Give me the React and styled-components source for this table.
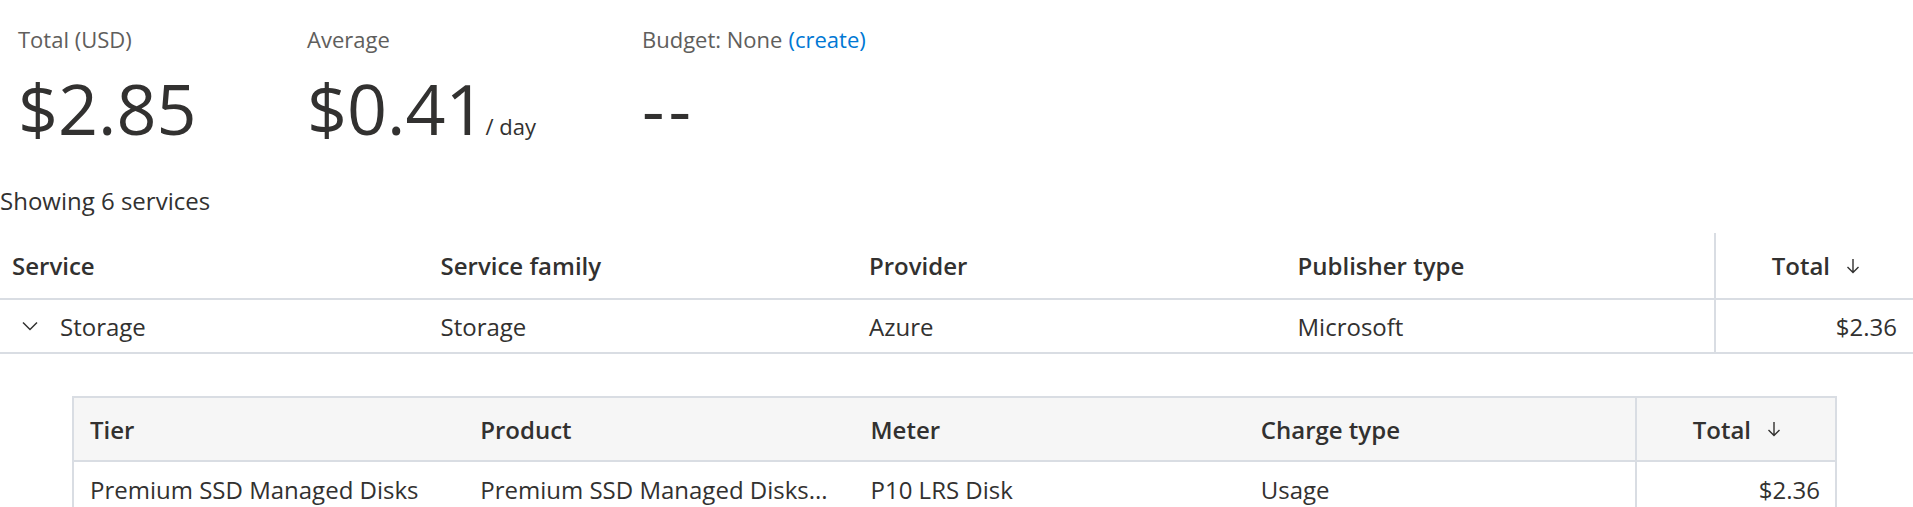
import React from 'react';
import styled, { createGlobalStyle } from 'styled-components';

const GlobalStyle = createGlobalStyle`
  html, body {
    margin: 0;
    padding: 0;
    background: #ffffff;
    overflow: hidden;
  }
  body {
    font-family: "Open Sans", "Noto Sans", sans-serif;
    color: #323130;
  }
`;

const LINE = '#d9dde3';

const Page = styled.div`
  width: 1913px;
`;

const Summary = styled.div`
  display: flex;
  padding: 24px 0 0 18px;
`;

const Kpi = styled.div`
  width: ${props => props.$width}px;
  flex-shrink: 0;
`;

const KpiLabel = styled.div`
  font-size: 22px;
  line-height: 30px;
  color: #605e5c;
  white-space: nowrap;
`;

const CreateLink = styled.a`
  color: #0078d4;
  text-decoration: none;
  margin-left: 6px;
  cursor: pointer;
`;

const KpiValueRow = styled.div`
  display: flex;
  align-items: baseline;
  margin-top: 19px;
  height: 70px;
`;

const KpiValue = styled.span`
  font-size: 70px;
  line-height: 70px;
  color: #323130;
  letter-spacing: ${props => props.$spacing || 0}px;
`;

const KpiUnit = styled.span`
  font-size: 22px;
  margin-left: 0;
  color: #323130;
`;

const ResultCount = styled.div`
  font-size: 24px;
  line-height: 32px;
  margin-top: 42px;
  color: #323130;
`;

const Table = styled.div`
  margin-top: 16px;
`;

const Row = styled.div`
  display: grid;
  grid-template-columns: ${props => props.$cols};
  height: ${props => props.$height}px;
  border-bottom: 2px solid ${LINE};
  background: ${props => props.$bg || 'transparent'};
`;

const Cell = styled.div`
  display: flex;
  align-items: center;
  justify-content: ${props => (props.$right ? 'flex-end' : 'flex-start')};
  padding: 0 ${props => props.$padRight ?? props.$pad}px 0 ${props => props.$pad}px;
  border-left: ${props => (props.$divider ? `2px solid ${LINE}` : 'none')};
  font-size: 24px;
  font-weight: ${props => (props.$head ? 600 : 400)};
  color: #323130;
  white-space: nowrap;
  overflow: hidden;
  min-width: 0;
`;

const CellText = styled.span`
  overflow: hidden;
  text-overflow: ellipsis;
`;

const Chevron = styled.svg`
  width: 16px;
  height: 10px;
  margin: 0 22px 0 10px;
  flex-shrink: 0;
`;

const SortArrow = styled.svg`
  width: 16px;
  height: 16px;
  margin-left: 15px;
  flex-shrink: 0;
`;

const Detail = styled.div`
  padding: 42px 76px 0 72px;
`;

const NestedTable = styled.div`
  border: 2px solid ${LINE};
  border-bottom: none;
`;

const ChevronDown = () => (
  <Chevron viewBox="0 0 16 10">
    <path d="M1 1.5 L8 8.5 L15 1.5" fill="none" stroke="#323130" strokeWidth="1.5" />
  </Chevron>
);

const SortDown = () => (
  <SortArrow viewBox="0 0 16 16">
    <path d="M8 1 V14.5 M2.5 9 L8 14.5 L13.5 9" fill="none" stroke="#323130" strokeWidth="1.4" />
  </SortArrow>
);

const MAIN_COLS = 'repeat(4, 1fr) 199px';
const NESTED_COLS = 'repeat(4, 1fr) 200px';

const App = () => {
  return (
    <Page>
      <GlobalStyle />
      <Summary>
        <Kpi $width={289}>
          <KpiLabel>Total (USD)</KpiLabel>
          <KpiValueRow>
            <KpiValue>$2.85</KpiValue>
          </KpiValueRow>
        </Kpi>
        <Kpi $width={335}>
          <KpiLabel>Average</KpiLabel>
          <KpiValueRow>
            <KpiValue>$0.41</KpiValue>
            <KpiUnit>/ day</KpiUnit>
          </KpiValueRow>
        </Kpi>
        <Kpi $width={400}>
          <KpiLabel>
            Budget: None<CreateLink>(create)</CreateLink>
          </KpiLabel>
          <KpiValueRow>
            <KpiValue $spacing={4}>--</KpiValue>
          </KpiValueRow>
        </Kpi>
      </Summary>

      <ResultCount>Showing 6 services</ResultCount>

      <Table>
        <Row $cols={MAIN_COLS} $height={65}>
          <Cell $head $pad={12}>Service</Cell>
          <Cell $head $pad={12}>Service family</Cell>
          <Cell $head $pad={12}>Provider</Cell>
          <Cell $head $pad={12}>Publisher type</Cell>
          <Cell $head $pad={12} $padRight={52} $right $divider>
            Total<SortDown />
          </Cell>
        </Row>
        <Row $cols={MAIN_COLS} $height={52}>
          <Cell $pad={12}>
            <ChevronDown />
            Storage
          </Cell>
          <Cell $pad={12}>Storage</Cell>
          <Cell $pad={12}>Azure</Cell>
          <Cell $pad={12}>Microsoft</Cell>
          <Cell $pad={12} $padRight={16} $right $divider>$2.36</Cell>
        </Row>
      </Table>

      <Detail>
        <NestedTable>
          <Row $cols={NESTED_COLS} $height={62} $bg="#f6f6f6">
            <Cell $head $pad={16}>Tier</Cell>
            <Cell $head $pad={16}>Product</Cell>
            <Cell $head $pad={16}>Meter</Cell>
            <Cell $head $pad={16}>Charge type</Cell>
            <Cell $head $pad={16} $padRight={53} $right $divider>
              Total<SortDown />
            </Cell>
          </Row>
          <Row $cols={NESTED_COLS} $height={54}>
            <Cell $pad={16}>Premium SSD Managed Disks</Cell>
            <Cell $pad={16}>
              <CellText>Premium SSD Managed Disks...</CellText>
            </Cell>
            <Cell $pad={16}>P10 LRS Disk</Cell>
            <Cell $pad={16}>Usage</Cell>
            <Cell $pad={16} $padRight={15} $right $divider>$2.36</Cell>
          </Row>
        </NestedTable>
      </Detail>
    </Page>
  );
};

export default App;
